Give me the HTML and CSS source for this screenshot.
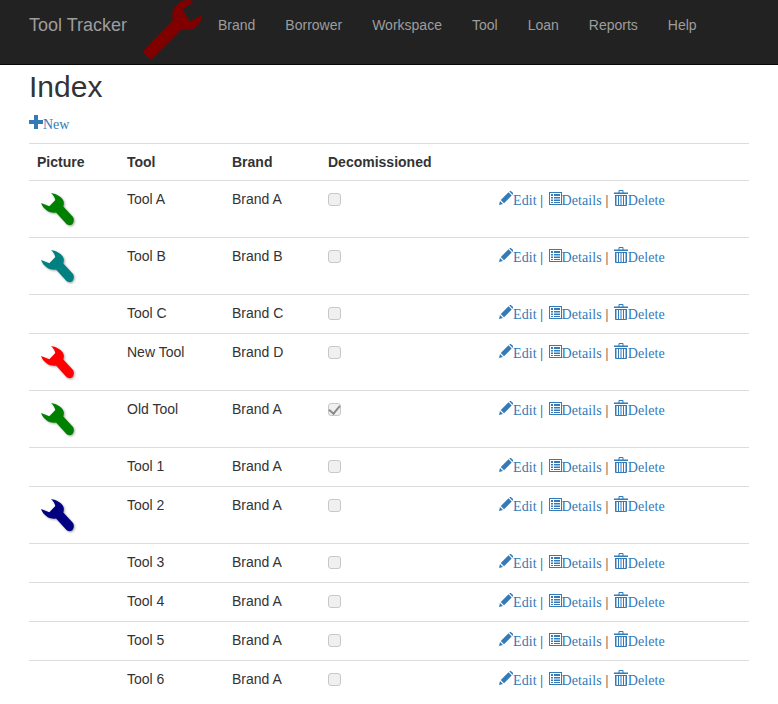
FILE: index.html
```html
<!DOCTYPE html>
<html lang="en">

<head>
    <meta charset="UTF-8">
    <meta name="viewport" content="width=device-width, initial-scale=1.0">
    <title>Index - Tool Tracker</title>
    <link rel="stylesheet" href="styles.css">
</head>

<body>

    <svg class="defs" width="0" height="0">
        <symbol id="logo" viewBox="0 0 60 60">
            <path d="M0.5 51.5 L31 20 A15.5 15.5 0 0 1 52 1.5 L40.5 9.5 L48 21.5 L60 15 A15.5 15.5 0 0 1 39.7 29.3 L9 60 Z" />
        </symbol>
        <symbol id="wrench" viewBox="0 0 40 40">
            <path d="M14 3 C20 4 25 7 26.5 11 C27.2 13 26.8 15 26.3 16.5 L36 27 C37.3 29 37 32 35.5 34 C33.5 35.8 31 35.3 29.5 34 L19 22.5 C16 23 13 22.5 10.5 21 C7.5 19 5 16 4 13 L12.3 16.3 L18.3 10 C18 7.5 16 5 14 3 Z" />
        </symbol>
        <symbol id="plus" viewBox="0 0 14 14">
            <path d="M5 0 H9 V5 H14 V9 H9 V14 H5 V9 H0 V5 H5 Z" />
        </symbol>
        <symbol id="pencil" viewBox="0 0 14 14">
            <path d="M0 14 L1 10 L4 13 Z M1.8 9 L9.5 1.3 L12.7 4.5 L5 12.2 Z M10.3 .5 C11 -.2 11.8 -.2 12.4 .4 L13.6 1.6 C14.2 2.2 14.2 3 13.5 3.7 Z" />
        </symbol>
        <symbol id="list" viewBox="0 0 13 13">
            <path fill-rule="evenodd" d="M0 0 H13 V13 H0 Z M1 1 V12 H12 V1 Z M2 2 H4 V4 H2 Z M5 2 H11 V4 H5 Z M2 5 H4 V6.5 H2 Z M5 5 H11 V6.5 H5 Z M2 7.5 H4 V9 H2 Z M5 7.5 H11 V9 H5 Z M2 10 H4 V11 H2 Z M5 10 H11 V11 H5 Z" />
        </symbol>
        <symbol id="trash" viewBox="0 0 14 16">
            <path fill-rule="evenodd" d="M0 2.5 H4.5 V1 Q4.5 0 5.5 0 H8.5 Q9.5 0 9.5 1 V2.5 H14 V4 H0 Z M5.5 1 V2.5 H8.5 V1 Z M1 5 H13 V15 Q13 16 12 16 H2 Q1 16 1 15 Z M2.5 6 V15 H4 V6 Z M5 6 V15 H6.5 V6 Z M7.5 6 V15 H9 V6 Z M10 6 V15 H11.5 V6 Z" />
        </symbol>
    </svg>

    <nav class="navbar">
        <a class="brand" href="#">Tool Tracker</a>
        <svg class="logo"><use href="#logo" /></svg>
        <ul class="nav-links">
            <li><a href="#">Brand</a></li>
            <li><a href="#">Borrower</a></li>
            <li><a href="#">Workspace</a></li>
            <li><a href="#">Tool</a></li>
            <li><a href="#">Loan</a></li>
            <li><a href="#">Reports</a></li>
            <li><a href="#">Help</a></li>
        </ul>
    </nav>

    <div class="container">
        <h2>Index</h2>
        <p class="create">
            <a href="#"><svg class="icon"><use href="#plus" /></svg>New</a>
        </p>

        <table>
            <thead>
                <tr>
                    <th class="col-picture">Picture</th>
                    <th class="col-tool">Tool</th>
                    <th class="col-brand">Brand</th>
                    <th class="col-decom">Decomissioned</th>
                    <th></th>
                </tr>
            </thead>
            <tbody>
                <tr>
                    <td><svg class="pic green"><use href="#wrench" /></svg></td>
                    <td>Tool A</td>
                    <td>Brand A</td>
                    <td><input type="checkbox" disabled></td>
                    <td class="actions">
                        <a href="#"><svg class="icon"><use href="#pencil" /></svg>Edit</a> |
                        <a href="#"><svg class="icon-list"><use href="#list" /></svg>Details</a> |
                        <a href="#"><svg class="icon-trash"><use href="#trash" /></svg>Delete</a>
                    </td>
                </tr>
                <tr>
                    <td><svg class="pic teal"><use href="#wrench" /></svg></td>
                    <td>Tool B</td>
                    <td>Brand B</td>
                    <td><input type="checkbox" disabled></td>
                    <td class="actions">
                        <a href="#"><svg class="icon"><use href="#pencil" /></svg>Edit</a> |
                        <a href="#"><svg class="icon-list"><use href="#list" /></svg>Details</a> |
                        <a href="#"><svg class="icon-trash"><use href="#trash" /></svg>Delete</a>
                    </td>
                </tr>
                <tr>
                    <td></td>
                    <td>Tool C</td>
                    <td>Brand C</td>
                    <td><input type="checkbox" disabled></td>
                    <td class="actions">
                        <a href="#"><svg class="icon"><use href="#pencil" /></svg>Edit</a> |
                        <a href="#"><svg class="icon-list"><use href="#list" /></svg>Details</a> |
                        <a href="#"><svg class="icon-trash"><use href="#trash" /></svg>Delete</a>
                    </td>
                </tr>
                <tr>
                    <td><svg class="pic red"><use href="#wrench" /></svg></td>
                    <td>New Tool</td>
                    <td>Brand D</td>
                    <td><input type="checkbox" disabled></td>
                    <td class="actions">
                        <a href="#"><svg class="icon"><use href="#pencil" /></svg>Edit</a> |
                        <a href="#"><svg class="icon-list"><use href="#list" /></svg>Details</a> |
                        <a href="#"><svg class="icon-trash"><use href="#trash" /></svg>Delete</a>
                    </td>
                </tr>
                <tr>
                    <td><svg class="pic green"><use href="#wrench" /></svg></td>
                    <td>Old Tool</td>
                    <td>Brand A</td>
                    <td><input type="checkbox" disabled checked></td>
                    <td class="actions">
                        <a href="#"><svg class="icon"><use href="#pencil" /></svg>Edit</a> |
                        <a href="#"><svg class="icon-list"><use href="#list" /></svg>Details</a> |
                        <a href="#"><svg class="icon-trash"><use href="#trash" /></svg>Delete</a>
                    </td>
                </tr>
                <tr>
                    <td></td>
                    <td>Tool 1</td>
                    <td>Brand A</td>
                    <td><input type="checkbox" disabled></td>
                    <td class="actions">
                        <a href="#"><svg class="icon"><use href="#pencil" /></svg>Edit</a> |
                        <a href="#"><svg class="icon-list"><use href="#list" /></svg>Details</a> |
                        <a href="#"><svg class="icon-trash"><use href="#trash" /></svg>Delete</a>
                    </td>
                </tr>
                <tr>
                    <td><svg class="pic navy"><use href="#wrench" /></svg></td>
                    <td>Tool 2</td>
                    <td>Brand A</td>
                    <td><input type="checkbox" disabled></td>
                    <td class="actions">
                        <a href="#"><svg class="icon"><use href="#pencil" /></svg>Edit</a> |
                        <a href="#"><svg class="icon-list"><use href="#list" /></svg>Details</a> |
                        <a href="#"><svg class="icon-trash"><use href="#trash" /></svg>Delete</a>
                    </td>
                </tr>
                <tr>
                    <td></td>
                    <td>Tool 3</td>
                    <td>Brand A</td>
                    <td><input type="checkbox" disabled></td>
                    <td class="actions">
                        <a href="#"><svg class="icon"><use href="#pencil" /></svg>Edit</a> |
                        <a href="#"><svg class="icon-list"><use href="#list" /></svg>Details</a> |
                        <a href="#"><svg class="icon-trash"><use href="#trash" /></svg>Delete</a>
                    </td>
                </tr>
                <tr>
                    <td></td>
                    <td>Tool 4</td>
                    <td>Brand A</td>
                    <td><input type="checkbox" disabled></td>
                    <td class="actions">
                        <a href="#"><svg class="icon"><use href="#pencil" /></svg>Edit</a> |
                        <a href="#"><svg class="icon-list"><use href="#list" /></svg>Details</a> |
                        <a href="#"><svg class="icon-trash"><use href="#trash" /></svg>Delete</a>
                    </td>
                </tr>
                <tr>
                    <td></td>
                    <td>Tool 5</td>
                    <td>Brand A</td>
                    <td><input type="checkbox" disabled></td>
                    <td class="actions">
                        <a href="#"><svg class="icon"><use href="#pencil" /></svg>Edit</a> |
                        <a href="#"><svg class="icon-list"><use href="#list" /></svg>Details</a> |
                        <a href="#"><svg class="icon-trash"><use href="#trash" /></svg>Delete</a>
                    </td>
                </tr>
                <tr>
                    <td></td>
                    <td>Tool 6</td>
                    <td>Brand A</td>
                    <td><input type="checkbox" disabled></td>
                    <td class="actions">
                        <a href="#"><svg class="icon"><use href="#pencil" /></svg>Edit</a> |
                        <a href="#"><svg class="icon-list"><use href="#list" /></svg>Details</a> |
                        <a href="#"><svg class="icon-trash"><use href="#trash" /></svg>Delete</a>
                    </td>
                </tr>
            </tbody>
        </table>
    </div>

</body>

</html>
```

FILE: styles.css
```css
* {
    box-sizing: border-box;
}

body {
    margin: 0;
    font-family: "Liberation Sans", Arial, sans-serif;
    font-size: 14px;
    line-height: 20px;
    color: #333;
    background-color: #fff;
}

a {
    color: #337ab7;
    text-decoration: none;
}

.defs {
    display: block;
    height: 0;
}

/* navbar */
.navbar {
    display: flex;
    height: 65px;
    padding-left: 29px;
    background-color: #222;
    border-bottom: 1px solid #080808;
    overflow: hidden;
}

.brand {
    padding-top: 15px;
    width: 113px;
    font-size: 18px;
    color: #9d9d9d;
}

.logo {
    flex: none;
    width: 60px;
    height: 60px;
    margin-right: 1px;
    fill: #800000;
}

.nav-links {
    display: flex;
    margin: 0;
    padding: 0;
    list-style: none;
}

.nav-links a {
    display: block;
    padding: 15px;
    color: #9d9d9d;
}

/* content */
.container {
    padding: 0 29px;
}

h2 {
    margin: 0;
    padding-top: 5px;
    font-size: 30px;
    font-weight: 500;
    line-height: 33px;
}

.create {
    margin: 12px 0 0;
    height: 28px;
    font-family: "Liberation Serif", serif;
}

.icon {
    width: 14px;
    height: 14px;
    fill: #337ab7;
}

.icon-list {
    width: 13px;
    height: 13px;
    margin-left: 2px;
    fill: #337ab7;
}

.icon-trash {
    width: 14px;
    height: 16px;
    margin-left: 2px;
    fill: #337ab7;
    vertical-align: -1px;
}

table {
    width: 720px;
    border-collapse: collapse;
    table-layout: fixed;
}

th,
td {
    padding: 8px;
    vertical-align: top;
    text-align: left;
    border-top: 1px solid #ddd;
}

th {
    height: 37px;
    font-weight: bold;
}

td {
    height: 39px;
}

.col-picture {
    width: 90px;
}

.col-tool {
    width: 105px;
}

.col-brand {
    width: 96px;
}

.col-decom {
    width: 171px;
}

input[type="checkbox"] {
    appearance: none;
    display: flex;
    align-items: center;
    justify-content: center;
    width: 13px;
    height: 13px;
    margin: 4px 0 0;
    background-color: #f0f0f0;
    border: 1px solid #c8c8c8;
    border-radius: 3px;
}

input[type="checkbox"]:checked::after {
    content: "";
    width: 5px;
    height: 9px;
    margin-top: -2px;
    border-right: 2px solid #8a8a8a;
    border-bottom: 2px solid #8a8a8a;
    transform: rotate(40deg);
}

.pic {
    display: block;
    width: 40px;
    height: 40px;
    margin: 1px 0 -1px;
    filter: drop-shadow(1px 1px 1px rgba(0, 0, 0, 0.35));
}

.green {
    fill: #008000;
}

.teal {
    fill: #008080;
}

.red {
    fill: #ff0000;
}

.navy {
    fill: #000080;
}

.actions {
    padding: 9px 8px 0;
    font-family: "Liberation Serif", serif;
    white-space: nowrap;
}

.actions a {
    letter-spacing: 0.1px;
}
```
